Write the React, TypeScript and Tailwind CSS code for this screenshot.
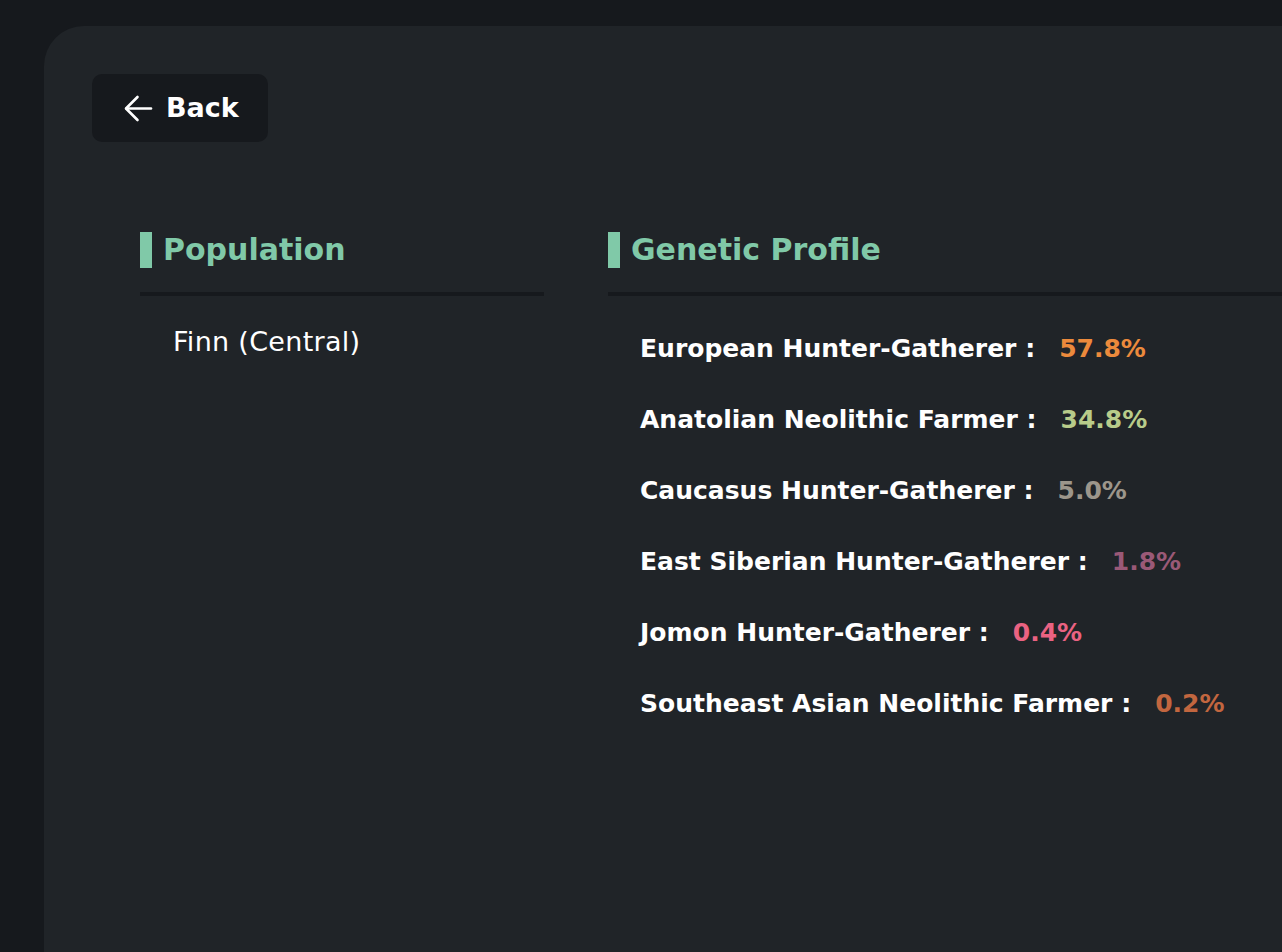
type Component = {
  name: string;
  value: string;
  color: string;
};

const profile: Component[] = [
  { name: "European Hunter-Gatherer", value: "57.8%", color: "text-[#ec8a3c]" },
  { name: "Anatolian Neolithic Farmer", value: "34.8%", color: "text-[#b8cc8a]" },
  { name: "Caucasus Hunter-Gatherer", value: "5.0%", color: "text-[#9c968b]" },
  { name: "East Siberian Hunter-Gatherer", value: "1.8%", color: "text-[#9a5977]" },
  { name: "Jomon Hunter-Gatherer", value: "0.4%", color: "text-[#ea6282]" },
  { name: "Southeast Asian Neolithic Farmer", value: "0.2%", color: "text-[#c2663f]" },
];

const SectionTitle = ({ title }: { title: string }) => (
  <div className="flex items-center gap-[11px] pb-6 border-b-4 border-[#16191d]">
    <div className="w-3 h-9 bg-[#80c9a8]" />
    <h2 className="text-[30px] leading-9 font-semibold text-[#80c9a8]">{title}</h2>
  </div>
);

const App = () => {
  return (
    <div
      className="min-h-screen bg-[#16191d] pt-[26px] pl-[44px] overflow-hidden"
      style={{ fontFamily: '"DejaVu Sans", sans-serif' }}
    >
      <div className="h-[926px] bg-[#202428] rounded-tl-[40px] pl-12 pt-12">
        <button className="flex items-center gap-[13px] w-[176px] h-[68px] pl-8 rounded-[10px] bg-[#16191d] text-white text-[27px] font-bold">
          <svg width="29" height="27" viewBox="0 0 29 27" fill="none" stroke="currentColor" strokeWidth="2.6" strokeLinecap="round" strokeLinejoin="round">
            <path d="M27 13.5H2.5" />
            <path d="M13.5 2L2 13.5 13.5 25" />
          </svg>
          Back
        </button>
        <div className="flex gap-16 pl-12 mt-[90px]">
          <div className="w-[404px] shrink-0">
            <SectionTitle title="Population" />
            <p className="pl-[33px] pt-[28px] text-[27px] leading-9 tracking-[0.3px] text-white">Finn (Central)</p>
          </div>
          <div className="flex-1">
            <SectionTitle title="Genetic Profile" />
            <div className="flex flex-col gap-[37px] pl-8 pt-[36px]">
              {profile.map((c) => (
                <div key={c.name} className="flex items-center gap-6 text-[25px] leading-[34px] font-semibold">
                  <span className="text-white">{c.name} :</span>
                  <span className={c.color}>{c.value}</span>
                </div>
              ))}
            </div>
          </div>
        </div>
      </div>
    </div>
  );
};

export default App;
